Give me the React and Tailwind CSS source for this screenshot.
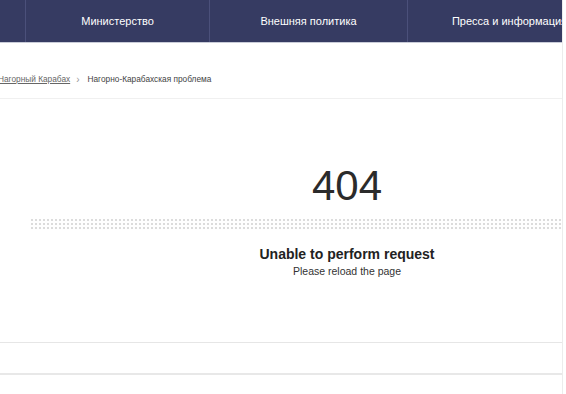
import React from 'react';

const navItems = [
    { label: '', width: 'w-[26px]' },
    { label: 'Министерство', width: 'w-[184px]' },
    { label: 'Внешняя политика', width: 'w-[198px]' },
    { label: 'Пресса и информация', width: 'w-[204px]' },
];

export default function App() {
    return (
        <div className="w-[566px] h-[394px] overflow-hidden bg-white font-['Liberation_Sans',Arial,sans-serif]">
            <div className="w-[563px] h-full border-r border-[#ececec] flex flex-col">
                {/* Навигация */}
                <nav className="h-[43px] shrink-0 flex overflow-hidden bg-[#363b62] border-b border-[#c9ccd8] text-white text-[11px]">
                    {navItems.map((item, i) => (
                        <div
                            key={i}
                            className={`${item.width} shrink-0 h-full flex items-center justify-center whitespace-nowrap border-r border-[#4b507a]`}
                        >
                            {item.label}
                        </div>
                    ))}
                </nav>

                {/* Хлебные крошки */}
                <div className="h-[56px] shrink-0 flex items-center text-[8.3px] text-[#444] border-b border-[#f0f0f0] pt-[17px]">
                    <span className="-ml-[2px] underline text-[#666]">Нагорный Карабах</span>
                    <span className="ml-[6px] mr-[8px] mt-[2px] text-[#999] text-[10px] leading-none">›</span>
                    <span>Нагорно-Карабахская проблема</span>
                </div>

                {/* Ошибка */}
                <div className="h-[244px] shrink-0 flex flex-col items-center pt-[66px] border-b border-[#e6e6e6]">
                    <div className="ml-[132px] text-[42px] leading-none text-[#2b2b2b] font-light">404</div>
                    <div className="self-stretch ml-[30px] mt-[11px] h-[12px] bg-[radial-gradient(circle,#dcdcdc_1px,transparent_1.3px)] bg-size-[4px_4px]" />
                    <div className="ml-[132px] mt-[16px] text-[14px] leading-[17px] font-bold text-[#222]">Unable to perform request</div>
                    <div className="ml-[132px] mt-[1px] text-[10.5px] leading-[14px] text-[#333]">Please reload the page</div>
                </div>

                <div className="h-[32px] shrink-0 border-b-2 border-[#e8e8e8]" />
                <div className="flex-1" />
            </div>
        </div>
    );
}
